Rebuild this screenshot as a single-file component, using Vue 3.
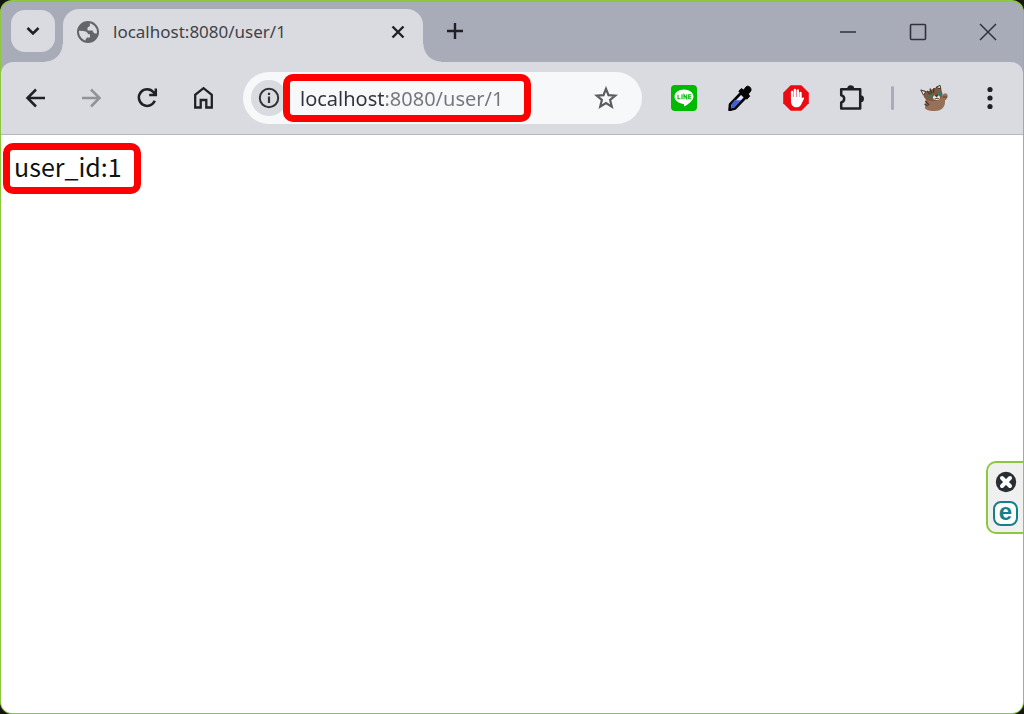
<script setup>
import { ref } from 'vue'

const address = ref('localhost:8080/user/1')
const userId = ref(1)
</script>

<template>
  <div class="window">
    <header class="titlebar">
      <button class="tab-search" aria-label="Search tabs">
        <svg width="14" height="14" viewBox="0 0 14 14"><path d="M1.500 4l5.500 5.500L12.500 4" fill="none" stroke="#202125" stroke-width="2.600" /></svg>
      </button>
      <div class="tab">
        <svg class="globe" width="24" height="24" viewBox="0 0 24 24">
          <circle cx="12" cy="12" r="10" fill="#dadbe0" stroke="#62666a" stroke-width="2" />
          <path d="M13.500 2C8 1 2.500 5 1.500 10.500L7 11C9.500 11 11.500 12 12 14L14 14.500V17.500H11L9.500 19.500V22C16 23.500 22 19 22.500 13L20 13.500C18 14 17.500 12.500 16.500 10.500H11.500V8C11.500 6.500 14 7 14 5.500Z" fill="#62666a" />
        </svg>
        <span class="tab-title">{{ address }}</span>
        <button class="tab-close" aria-label="Close tab">
          <svg width="14" height="14" viewBox="0 0 14 14"><path d="M1.500 1.500l11 11M12.500 1.500l-11 11" stroke="#202125" stroke-width="2.400" /></svg>
        </button>
      </div>
      <button class="new-tab" aria-label="New tab">
        <svg width="18" height="18" viewBox="0 0 18 18"><path d="M9 1v16M1 9h16" stroke="#202125" stroke-width="2.400" /></svg>
      </button>
      <div class="controls">
        <button aria-label="Minimize"><svg width="18" height="18" viewBox="0 0 18 18"><path d="M1 9h16" stroke="#303238" stroke-width="1.600" /></svg></button>
        <button aria-label="Maximize"><svg width="18" height="18" viewBox="0 0 18 18"><rect x="1.500" y="1.500" width="15" height="15" rx="1" fill="none" stroke="#303238" stroke-width="1.600" /></svg></button>
        <button aria-label="Close window"><svg width="18" height="18" viewBox="0 0 18 18"><path d="M1 1l16 16M17 1L1 17" stroke="#303238" stroke-width="1.500" /></svg></button>
      </div>
    </header>

    <nav class="toolbar">
      <button aria-label="Back">
        <svg width="24" height="24" viewBox="0 0 24 24" fill="none" stroke="#202125" stroke-width="2.500"><path d="M21 12H4M12 3.500L3.500 12l8.500 8.500" /></svg>
      </button>
      <button aria-label="Forward" disabled>
        <svg width="24" height="24" viewBox="0 0 24 24" fill="none" stroke="#929399" stroke-width="2.500"><path d="M2 12h17M11 3.500l8.500 8.500-8.500 8.500" /></svg>
      </button>
      <button aria-label="Reload">
        <svg width="24" height="24" viewBox="0 0 24 24" fill="none" stroke="#202125" stroke-width="2.500"><path d="M18.800 14.800A8.300 8.300 0 1 1 17.500 6.200L20 9M19.800 2.500V9H13.200" /></svg>
      </button>
      <button aria-label="Home">
        <svg width="24" height="24" viewBox="0 0 24 24" fill="none" stroke="#202125" stroke-width="2.300"><path d="M3.200 21.500V8.800L11.500 2.200l8.300 6.600v12.700H14.300V14H8.700v7.500z" /></svg>
      </button>

      <div class="omnibox">
        <button class="site-info" aria-label="Site information">
          <svg width="22" height="22" viewBox="0 0 22 22"><circle cx="11" cy="11" r="9.200" fill="none" stroke="#303238" stroke-width="2" /><path d="M11 9.500v6.500M11 5.800v2.200" stroke="#303238" stroke-width="2.200" /></svg>
        </button>
        <input v-model="address" class="address marked" type="text" aria-label="Address" spellcheck="false" />
        <button class="bookmark" aria-label="Bookmark this page">
          <svg width="24" height="24" viewBox="0 0 24 24"><path d="M12 2.800l2.500 6.300 6.800.5-5.200 4.300 1.700 6.700L12 17l-5.800 3.600 1.700-6.700-5.200-4.300 6.800-.5z" fill="none" stroke="#5b5d61" stroke-width="2.200" /></svg>
        </button>
      </div>

      <div class="extensions">
        <button aria-label="LINE">
          <svg width="26" height="26" viewBox="0 0 26 26">
            <rect width="26" height="26" rx="4" fill="#00b900" />
            <path d="M13 4.500c5.200 0 9.500 3.100 9.500 7.100 0 4-5.500 8-9.500 10 .2-1.300.4-2.500-.8-2.700-5-.6-8.700-3.500-8.700-7.300 0-4 4.300-7.100 9.500-7.100z" fill="#fff" />
            <path d="M7 9.800v4h2.500M11 9.300v5M13 14.300V9.800l2.800 4V9.300M20 9.800h-2.300v4H20M17.700 11.800H20" fill="none" stroke="#00b900" stroke-width="1.100" />
          </svg>
        </button>
        <button aria-label="Color picker">
          <svg width="26" height="26" viewBox="0 0 26 26">
            <path d="M14 8l4.500 4.500L8 23.500 2.500 25 3 19.500z" fill="#dfe4f4" stroke="#050505" stroke-width="2.600" stroke-linejoin="round" />
            <path d="M7.500 15.300h6.700L7.200 22.500l-3.200 1 .4-4z" fill="#3f5fd0" />
            <path d="M11.800 6.200l2.500-2.600 2.400 1.500 2.500-3.300c1.700-2 6 1 4.600 4.100l-2.500 3.200 1.400 2.100-2.900 3z" fill="#050505" stroke="#050505" />
          </svg>
        </button>
        <button aria-label="Content blocker">
          <svg width="26" height="26" viewBox="0 0 26 26">
            <path d="M7.700.2h10.600l7.500 7.500v10.600l-7.500 7.500H7.700L.2 18.300V7.700z" fill="#eb0b13" />
            <path d="M9.100 14V7M11.900 13V5M14.800 13V5.500M17.500 13.500V8" stroke="#fff" stroke-width="2.400" stroke-linecap="round" />
            <path d="M8 12h10.600v1.500l1.300-1c.8-.4 1.600.3 1.200 1.100l-2.900 5.800c-1.700 3.700-7.400 4-9.300.5C7.700 17.900 8 15.500 8 12z" fill="#fff" />
          </svg>
        </button>
        <button aria-label="Extensions">
          <svg width="28" height="26" viewBox="0 0 28 26">
            <path d="M3.200 4.200h19v19.300h-19v-6c4-1 4-6.300 0-7.300z" fill="none" stroke="#202125" stroke-width="2.500" stroke-linejoin="round" />
            <path d="M9.200 3.800a3.500 3.500 0 0 1 7 0zM22.500 10.200a3.500 3.500 0 0 1 0 7z" fill="#202125" />
          </svg>
        </button>
        <span class="separator"></span>
        <button aria-label="Profile">
          <svg width="30" height="28" viewBox="0 0 30 28">
            <path d="M7 12h16l1-1.500c.5-1.500 4-1.500 4.500 0 .5 3-.5 4.500-2.500 6 .5 6-3 10.500-10 10.500-5 .3-9-1-10-3z" fill="#967057" />
            <path d="M1.500 5.500l7 2L18 3l3-2 2.200 7.500c1.500 4.500-2 8-8 8.500-6.500.5-11-2.500-10.500-6z" fill="#80593f" />
            <path d="M1.800 6l5 1.700-2.300 3.500zM17 3.300l4-2 .8 3.700z" fill="#eee5db" stroke="#47372c" />
            <path d="M8 7l4 4M11 4.500l1.800 5M15 4l-.5 5M6.500 17l3.500 4M5.500 20l3 2" stroke="#4a3529" stroke-width="1.300" />
            <ellipse cx="17.500" cy="13.500" rx="3.500" ry="2.500" fill="#eee8dd" />
            <circle cx="12" cy="12" r="1.800" fill="#287e79" /><circle cx="20.500" cy="9.800" r="1.800" fill="#287e79" />
            <path d="M16 11.500l2.800-.5-1 2zM15.500 15l2.500-.8 2 .3M25 14v-2M27 14v-2" fill="#33261f" stroke="#33261f" stroke-width=".7" />
          </svg>
        </button>
        <button aria-label="Menu">
          <svg width="8" height="24" viewBox="0 0 8 24" fill="#202125"><circle cx="4" cy="3.500" r="2.600" /><circle cx="4" cy="12" r="2.600" /><circle cx="4" cy="20.500" r="2.600" /></svg>
        </button>
      </div>
    </nav>

    <main class="page">
      <p class="result marked">user_id:{{ userId }}</p>
    </main>

    <aside class="side-widget">
      <button aria-label="Close widget">
        <svg width="22" height="22" viewBox="0 0 22 22"><circle cx="11" cy="11" r="10.200" fill="#292d34" /><path d="M7 7l8 8M15 7l-8 8" stroke="#fff" stroke-width="4" stroke-linecap="round" /></svg>
      </button>
      <button aria-label="Open widget">
        <span class="e-badge">e</span>
      </button>
    </aside>
  </div>
</template>

<style>
body {
  background: #151515;
}
</style>

<style scoped>
.window {
  position: relative;
  display: flex;
  flex-direction: column;
  box-sizing: border-box;
  min-height: 100vh;
  border: 1px solid #8dc63f;
  border-top-width: 2px;
  border-radius: 12px;
  overflow: hidden;
  background: #a8abb8;
  font-family: "Noto Sans CJK JP", sans-serif;
}

button {
  display: flex;
  align-items: center;
  justify-content: center;
  margin: 0;
  padding: 0;
  border: 0;
  background: none;
}

svg {
  display: block;
  flex: none;
}

.titlebar {
  display: flex;
  height: 60px;
  padding-left: 10px;
}

.tab-search {
  width: 44px;
  height: 42px;
  margin: 8px 8px 0 0;
  border-radius: 14px;
  background: #dadbe0;
}

.tab {
  position: relative;
  display: flex;
  align-items: center;
  box-sizing: border-box;
  width: 360px;
  margin-top: 7px;
  padding: 0 15px 8px 13px;
  border-radius: 16px 16px 0 0;
  background: #dadbe0;
}

.tab::before,
.tab::after {
  content: "";
  position: absolute;
  bottom: 0;
  width: 18px;
  height: 18px;
}

.tab::before {
  right: 100%;
  background: radial-gradient(circle at 0 0, transparent 17px, #dadbe0 18px);
}

.tab::after {
  left: 100%;
  background: radial-gradient(circle at 100% 0, transparent 17px, #dadbe0 18px);
}

.tab-title {
  flex: 1;
  margin-left: 13px;
  color: #404247;
  font-family: "Noto Sans", sans-serif;
  font-size: 17px;
  line-height: 24px;
}

.tab-close {
  width: 20px;
  height: 20px;
}

.new-tab {
  width: 32px;
  height: 32px;
  margin: 13px 0 0 16px;
}

.controls {
  display: flex;
  margin-left: auto;
}

.controls button {
  width: 70px;
}

.toolbar {
  display: flex;
  align-items: center;
  box-sizing: border-box;
  height: 73px;
  padding: 0 5px 0 7px;
  border-bottom: 1px solid #b6b7be;
  border-radius: 12px 12px 0 0;
  background: #dadbe0;
}

.toolbar > button,
.extensions button {
  width: 56px;
  height: 44px;
}

.omnibox {
  display: flex;
  flex: 1;
  align-items: center;
  box-sizing: border-box;
  height: 52px;
  min-width: 0;
  margin: 0 14px 0 11px;
  padding: 0 8px;
  border-radius: 26px;
  background: #f6f8fa;
}

.site-info {
  flex: none;
  width: 36px;
  height: 36px;
  margin-right: -4px;
  border-radius: 18px;
  background: #dadbe0;
}

.marked {
  box-sizing: border-box;
  border: 7px solid #ff0000;
  border-radius: 10px;
}

.address {
  width: 248px;
  height: 48px;
  padding: 0 0 0 10px;
  outline: none;
  background: linear-gradient(90deg, #303238 95px, #74767b 95px) text;
  color: transparent;
  font-family: "Noto Sans", sans-serif;
  font-size: 20px;
  line-height: 32px;
}

.bookmark {
  width: 40px;
  height: 40px;
  margin: 0 8px 0 auto;
}

.extensions {
  display: flex;
  align-items: center;
}

.separator {
  width: 3px;
  height: 24px;
  margin: 0 12px 0 11px;
  border-radius: 2px;
  background: #a8abb8;
}

.page {
  flex: 1;
  padding: 8px 2px;
  background: #ffffff;
}

.result {
  width: fit-content;
  height: 51px;
  margin: 0;
  padding: 0 12px 0 4px;
  color: #111111;
  font-size: 25px;
  line-height: 32px;
}

.side-widget {
  position: absolute;
  top: 459px;
  right: 0;
  display: flex;
  flex-direction: column;
  align-items: center;
  justify-content: center;
  gap: 8px;
  box-sizing: border-box;
  width: 37px;
  height: 73px;
  padding-top: 2px;
  border: 2px solid #8dc63f;
  border-right: 0;
  border-radius: 10px 0 0 10px;
  background: #f0f0f0;
}

.e-badge {
  display: block;
  box-sizing: border-box;
  width: 25px;
  height: 25px;
  border: 2px solid #15808a;
  border-radius: 8px;
  background: #ffffff;
  color: #15808a;
  font-family: "Liberation Sans", sans-serif;
  font-size: 24px;
  font-weight: 700;
  line-height: 18px;
}
</style>
